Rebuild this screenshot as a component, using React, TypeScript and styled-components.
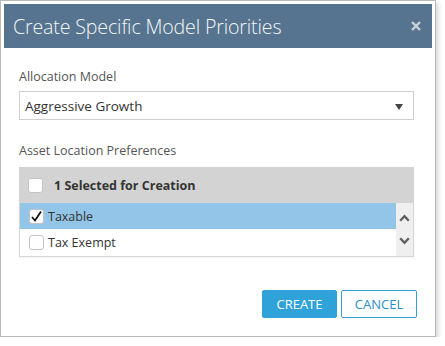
import React from "react";
import styled, { createGlobalStyle } from "styled-components";

const GlobalStyle = createGlobalStyle`
  html, body { margin: 0; padding: 0; background: #ffffff; }
  body { font-family: "Open Sans", "Noto Sans", sans-serif; }
  * { box-sizing: border-box; }
`;

const Dialog = styled.div`
  width: 436px;
  height: 337px;
  border: 1px solid #b9b9b9;
  padding: 3px;
  background: #fff;
  box-shadow: 2px 3px 5px rgba(0, 0, 0, 0.18);
  display: flex;
  flex-direction: column;
`;

const Header = styled.div`
  height: 44px;
  background: #56748f;
  display: flex;
  align-items: center;
  justify-content: space-between;
  padding: 0 10px 0 9px;
`;

const Title = styled.h1`
  margin: 0;
  font-family: "Open Sans", sans-serif;
  font-weight: 300;
  font-size: 19.6px;
  color: #f4f6f8;
  letter-spacing: -0.15px;
`;

const Close = styled.button`
  border: 0;
  background: transparent;
  padding: 0;
  width: 12px;
  height: 12px;
  display: flex;
  cursor: pointer;
`;

const Body = styled.div`
  padding: 0 18px 0 15px;
  display: flex;
  flex-direction: column;
`;

const Label = styled.div<{ $top: number }>`
  margin-top: ${(p) => p.$top}px;
  font-size: 12.5px;
  line-height: 18px;
  color: #555;
`;

const Select = styled.div`
  margin-top: 5px;
  height: 29px;
  border: 1px solid #cfcfcf;
  display: flex;
  align-items: center;
  justify-content: space-between;
  padding: 0 10px 0 5px;
  font-size: 13.5px;
  color: #333;
`;

const Caret = styled.span`
  width: 0;
  height: 0;
  border-left: 4px solid transparent;
  border-right: 4px solid transparent;
  border-top: 6px solid #444;
  margin-top: 2px;
`;

const Grid = styled.div`
  margin-top: 7px;
  border: 1px solid #d6d6d6;
  border-top: 0;
  box-shadow: 0 1px 2px rgba(0, 0, 0, 0.06);
`;

const GridHeader = styled.div`
  height: 36px;
  background: #d3d3d3;
  display: flex;
  align-items: center;
  padding-left: 8px;
  gap: 11px;
  font-weight: 700;
  font-size: 12.5px;
  color: #333;
`;

const GridBody = styled.div`
  display: flex;
`;

const Rows = styled.div`
  flex: 1;
  display: flex;
  flex-direction: column;
`;

const Row = styled.div<{ $selected?: boolean; $h: number }>`
  height: ${(p) => p.$h}px;
  background: ${(p) => (p.$selected ? "#92c5e7" : "#fff")};
  display: flex;
  align-items: center;
  padding-left: 9px;
  gap: 4px;
  font-size: 12.5px;
  color: #333;
`;

const Check = styled.span`
  width: 15px;
  height: 15px;
  border: 1px solid #c4c4c4;
  border-radius: 3px;
  background: #fff;
  display: flex;
  align-items: center;
  justify-content: center;
  flex-shrink: 0;
`;

const Scroll = styled.div`
  width: 17px;
  background: #efefef;
  display: flex;
  flex-direction: column;
  align-items: center;
  justify-content: center;
  gap: 15px;
`;

const Footer = styled.div`
  margin-top: auto;
  margin-bottom: 15px;
  display: flex;
  justify-content: flex-end;
  gap: 4px;
  padding-right: 15px;
`;

const Button = styled.button<{ $primary?: boolean }>`
  height: 28px;
  width: ${(p) => (p.$primary ? 75 : 76)}px;
  border: 1px solid ${(p) => (p.$primary ? "#2fa3d9" : "#2f9fd6")};
  border-radius: 2px;
  background: ${(p) => (p.$primary ? "#2fa3d9" : "#fff")};
  color: ${(p) => (p.$primary ? "#fff" : "#2a8dc4")};
  font-family: "Open Sans", sans-serif;
  font-size: 13px;
  padding: 0;
  cursor: pointer;
`;

const Chevron = ({ up }: { up?: boolean }) => (
  <svg width="11" height="8" viewBox="0 0 11 8">
    <path
      d={up ? "M1.2 6.8 L5.5 2.2 L9.8 6.8" : "M1.2 1.2 L5.5 5.8 L9.8 1.2"}
      fill="none"
      stroke="#5f5f5f"
      strokeWidth="2.3"
    />
  </svg>
);

export default function App() {
  return (
    <>
      <GlobalStyle />
      <Dialog>
        <Header>
          <Title>Create Specific Model Priorities</Title>
          <Close aria-label="close">
            <svg width="12" height="12" viewBox="0 0 12 12">
              <path d="M2 2 L10 10 M10 2 L2 10" stroke="#c9d2db" strokeWidth="2.4" />
            </svg>
          </Close>
        </Header>
        <Body>
          <Label $top={20}>Allocation Model</Label>
          <Select>
            <span>Aggressive Growth</span>
            <Caret />
          </Select>
          <Label $top={22}>Asset Location Preferences</Label>
          <Grid>
            <GridHeader>
              <Check />
              <span>1 Selected for Creation</span>
            </GridHeader>
            <GridBody>
              <Rows>
                <Row $selected $h={26}>
                  <Check>
                    <svg width="13" height="13" viewBox="0 0 13 13">
                      <path d="M2 7 L5 10.5 L11 1.5" fill="none" stroke="#111" strokeWidth="1.7" />
                    </svg>
                  </Check>
                  <span>Taxable</span>
                </Row>
                <Row $h={27}>
                  <Check />
                  <span>Tax Exempt</span>
                </Row>
              </Rows>
              <Scroll>
                <Chevron up />
                <Chevron />
              </Scroll>
            </GridBody>
          </Grid>
        </Body>
        <Footer>
          <Button $primary>CREATE</Button>
          <Button>CANCEL</Button>
        </Footer>
      </Dialog>
    </>
  );
}
